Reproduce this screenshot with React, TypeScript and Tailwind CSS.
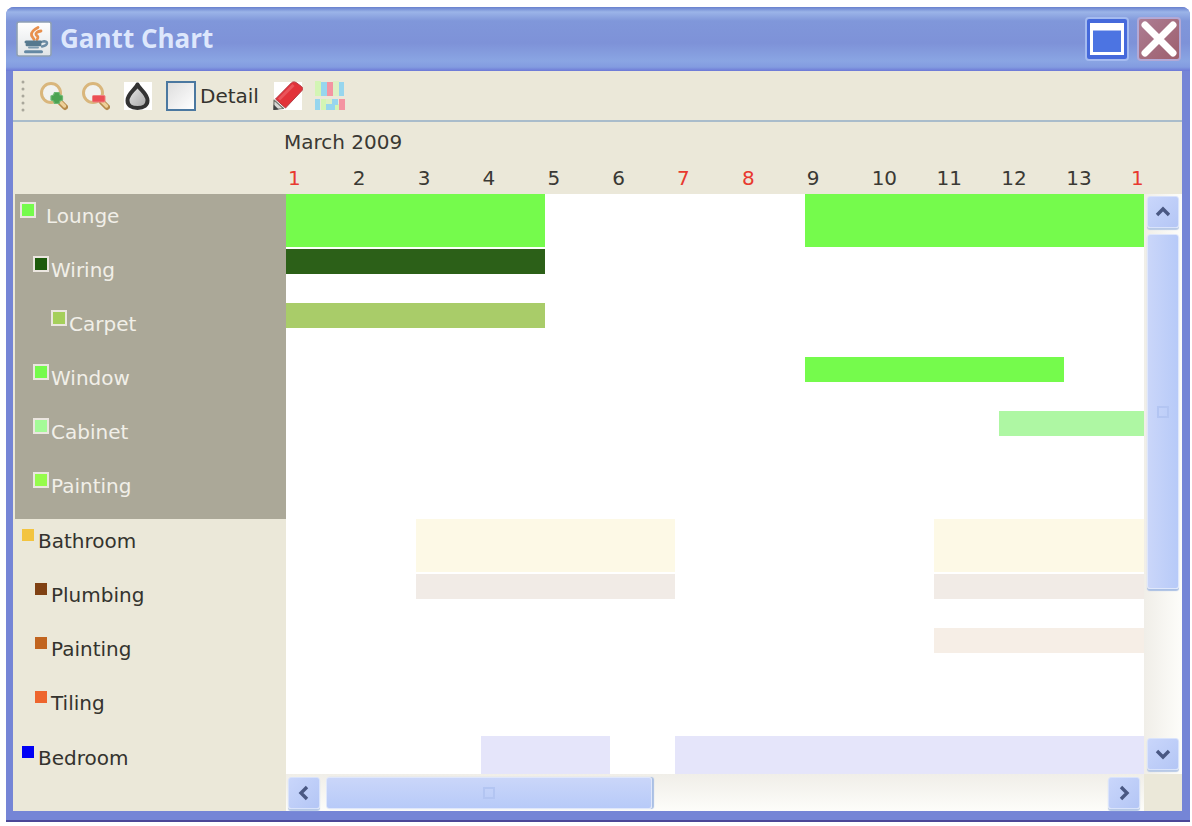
import React from "react";

type Bar = { span: string; color: string };
type Task = {
  name: string;
  indent: string;
  swatch: string;
  bars: Bar[];
};
type Group = { selected: boolean; tasks: Task[] };

const LEVEL0 = "pl-[7px]";
const LEVEL1 = "pl-5";
const LEVEL2 = "pl-[38px]";

const groups: Group[] = [
  {
    selected: true,
    tasks: [
      {
        name: "Lounge",
        indent: LEVEL0,
        swatch: "bg-[#75fb4c] mr-2",
        bars: [
          { span: "col-start-1 col-end-5", color: "bg-[#75fb4c]" },
          { span: "col-start-9 col-end-15", color: "bg-[#75fb4c]" },
        ],
      },
      {
        name: "Wiring",
        indent: LEVEL1,
        swatch: "bg-[#1d5a0c]",
        bars: [{ span: "col-start-1 col-end-5", color: "bg-[#2c6018]" }],
      },
      {
        name: "Carpet",
        indent: LEVEL2,
        swatch: "bg-[#a5cf5b]",
        bars: [{ span: "col-start-1 col-end-5", color: "bg-[#a9cc69]" }],
      },
      {
        name: "Window",
        indent: LEVEL1,
        swatch: "bg-[#75fb4c]",
        bars: [{ span: "col-start-9 col-end-13", color: "bg-[#75fb4c]" }],
      },
      {
        name: "Cabinet",
        indent: LEVEL1,
        swatch: "bg-[#a4fb98]",
        bars: [{ span: "col-start-12 col-end-15", color: "bg-[#aef7a3]" }],
      },
      { name: "Painting", indent: LEVEL1, swatch: "bg-[#96fb4c]", bars: [] },
    ],
  },
  {
    selected: false,
    tasks: [
      {
        name: "Bathroom",
        indent: LEVEL0,
        swatch: "bg-[#f3c43f]",
        bars: [
          { span: "col-start-3 col-end-7", color: "bg-[#fdf9e6]" },
          { span: "col-start-11 col-end-15", color: "bg-[#fdf9e6]" },
        ],
      },
      {
        name: "Plumbing",
        indent: LEVEL1,
        swatch: "bg-[#804113]",
        bars: [
          { span: "col-start-3 col-end-7", color: "bg-[#f1ebe6]" },
          { span: "col-start-11 col-end-15", color: "bg-[#f1ebe6]" },
        ],
      },
      {
        name: "Painting",
        indent: LEVEL1,
        swatch: "bg-[#c1641f]",
        bars: [{ span: "col-start-11 col-end-15", color: "bg-[#f6eee6]" }],
      },
      { name: "Tiling", indent: LEVEL1, swatch: "bg-[#ee652d]", bars: [] },
    ],
  },
];

const bedroom: Task = {
  name: "Bedroom",
  indent: LEVEL0,
  swatch: "bg-[#0000f5]",
  bars: [
    { span: "col-start-4 col-end-6", color: "bg-[#e5e5fa]" },
    { span: "col-start-7 col-end-15", color: "bg-[#e5e5fa]" },
  ],
};

const days = ["1", "2", "3", "4", "5", "6", "7", "8", "9", "10", "11", "12", "13", "1"];
const weekend = [0, 6, 7, 13];

const DAY_GRID = "grid grid-cols-[repeat(13,minmax(0,65fr))_minmax(0,15fr)]";

function TaskLabel({ task, selected, height }: { task: Task; selected: boolean; height: string }) {
  return (
    <li className={`flex items-start gap-1 ${height} ${task.indent}`}>
      <span
        className={`mt-[10px] size-3 shrink-0 ${task.swatch} ${selected ? "ring-2 ring-[#ebe6e0]" : ""}`}
      />
      <span className={`pt-2 leading-7 ${selected ? "text-[#f1efe8]" : "text-[#34332e]"}`}>
        {task.name}
      </span>
    </li>
  );
}

function BarRow({ task, height }: { task: Task; height: string }) {
  const summary = task.indent === LEVEL0;
  return (
    <div className={`${DAY_GRID} ${height}`}>
      {task.bars.map((bar) => (
        <div
          key={bar.span}
          className={`row-start-1 ${bar.span} ${bar.color} ${summary ? "max-h-[53px]" : "mt-px h-[25px]"}`}
        />
      ))}
    </div>
  );
}

function Chevron({ d, label }: { d: string; label: string }) {
  return (
    <button
      type="button"
      aria-label={label}
      className="flex size-8 shrink-0 items-center justify-center rounded-[3px] border border-[#d9e3fb] bg-linear-to-br from-[#c9d6fb] to-[#b4c6f5] shadow-[0_2px_1px_#b7c9e6]"
    >
      <svg viewBox="0 0 16 16" className="size-4" fill="none" stroke="#4a5883" strokeWidth="3.4">
        <path d={d} />
      </svg>
    </button>
  );
}

function JavaIcon() {
  return (
    <svg viewBox="0 0 36 36" className="size-9 shrink-0">
      <defs>
        <linearGradient id="java-bg" x1="0" y1="0" x2="0" y2="1">
          <stop offset="0" stopColor="#ffffff" />
          <stop offset="1" stopColor="#e0e4e6" />
        </linearGradient>
      </defs>
      <rect x="1" y="1" width="34" height="34" rx="2" fill="url(#java-bg)" stroke="#8fa0b4" strokeWidth="1.6" />
      <g fill="none" strokeLinecap="round">
        <path
          d="M22 6.500c-3 1.500-7 4-6.500 7.500.3 2 2 2.500 2.500 4.500M25 10c-3.500.5-5.500 2-5 3.500.4 1.500 3.500 1.500 1 5"
          stroke="#e8904d"
          strokeWidth="2.800"
        />
        <path d="M10 21h15M11 23.800h13" stroke="#56798f" strokeWidth="3" />
        <path d="M27 20.500c5-1 6 3.500-1 5" stroke="#6c8ca4" strokeWidth="2.600" />
        <path d="M13 26.500h9" stroke="#7f9bb0" strokeWidth="2" />
        <path d="M9.500 30.800h16" stroke="#6488a3" strokeWidth="3" />
      </g>
    </svg>
  );
}

function Magnifier({ sign }: { sign: "in" | "out" }) {
  return (
    <svg viewBox="0 0 28 30" className="h-[30px] w-7">
      <path d="M20 21l5 5" stroke="#b58a4b" strokeWidth="6" strokeLinecap="round" />
      <path d="M20 20.500l4.500 4.500" stroke="#edcf98" strokeWidth="3.400" strokeLinecap="round" />
      <circle cx="11" cy="12" r="9.500" fill="#f1f2ef" stroke="#d9b67c" strokeWidth="3" />
      {sign === "in" ? (
        <path
          d="M14.500 11.500h4.500l1 2.500 2.500 1v4l-2.500 1-1 2.500h-4.500l-1-2.500-2.500-1v-4l2.500-1z"
          fill="#4ba352"
          stroke="#6cb873"
          strokeWidth="1.200"
          strokeLinejoin="round"
        />
      ) : (
        <rect x="10.500" y="14.500" width="12.500" height="6.500" rx="1" fill="#ec4f56" stroke="#ee8080" />
      )}
    </svg>
  );
}

function DropIcon() {
  return (
    <svg viewBox="0 0 28 30" className="h-[30px] w-7">
      <defs>
        <linearGradient id="drop-fill" x1="0" y1="0" x2="1" y2="1">
          <stop offset="0" stopColor="#ededed" />
          <stop offset="1" stopColor="#a2a2a2" />
        </linearGradient>
      </defs>
      <rect y="1" width="28" height="28" fill="#ffffff" />
      <path
        d="M13.500 3.500C12 8 3.500 12.500 3.500 19.500c0 4.500 3.500 7.500 10 7.500s10-3 10-7.500C23.500 12.500 15 8 13.500 3.500z"
        fill="url(#drop-fill)"
        stroke="#333333"
        strokeWidth="4"
        strokeLinejoin="round"
      />
    </svg>
  );
}

function PencilIcon() {
  return (
    <svg viewBox="0 0 30 30" className="size-[30px]">
      <rect x="1" y="1" width="28" height="28" fill="#ffffff" />
      <path d="M.8 28.500L1 19l9.500 8.500z" fill="#d8d8d4" stroke="#77776f" strokeWidth="1.200" strokeLinejoin="round" />
      <path d="M.5 29l.2-5.500 5 5z" fill="#444444" />
      <path
        d="M2.500 18L18.500 1.800c1-1 3-1.300 4.500-.3l5.500 4c1.500 1.200 1.500 3 .5 4L12.500 27z"
        fill="#e2323a"
        stroke="#b23a42"
        strokeWidth="1"
        strokeLinejoin="round"
      />
      <path d="M6 18.500L20.500 4" stroke="#ea545b" strokeWidth="3" />
    </svg>
  );
}

function BlocksIcon() {
  return (
    <svg viewBox="0 0 30 30" className="size-[30px]">
      <g fill="#d3f5b4">
        <rect x="0" y="0" width="6" height="15" />
        <rect x="18" y="0" width="6" height="15" opacity="0.6" />
        <rect x="6" y="18" width="5" height="11" />
        <rect x="11" y="18" width="7" height="5" opacity="0.6" />
        <rect x="19" y="23" width="5" height="6" />
      </g>
      <g fill="#97d6ee">
        <rect x="6" y="1" width="6" height="14" />
        <rect x="24" y="1" width="5" height="14" />
        <rect x="0" y="18" width="5" height="11" />
        <rect x="17" y="18" width="6" height="6" />
        <rect x="11" y="23" width="9" height="6" />
      </g>
      <g fill="#f494a2">
        <rect x="12" y="1" width="6" height="14" />
        <rect x="24" y="18" width="6" height="11" />
      </g>
    </svg>
  );
}

function Grip() {
  return (
    <svg viewBox="0 0 4 34" className="mr-[15px] h-[34px] w-1" fill="#a9a79b">
      <circle cx="2" cy="3" r="1.500" />
      <circle cx="2" cy="10" r="1.500" />
      <circle cx="2" cy="17" r="1.500" />
      <circle cx="2" cy="24" r="1.500" />
      <circle cx="2" cy="31" r="1.500" />
    </svg>
  );
}

export default function App() {
  return (
    <div className="bg-white pt-[7px] pr-0.5 pb-1 pl-1.5 font-['DejaVu_Sans',sans-serif] text-[20px]">
      <div className="overflow-hidden rounded-t-lg border-b-2 border-[#4b4797] bg-[#7585d6]">
        <header className="flex h-16 items-center gap-2 bg-[linear-gradient(to_bottom,#6880cd_0px,#9bb4e8_5px,#8097da_14px,#7e92d8_36px,#8aa5e3_54px,#839ce0_60px,#6d78d6_64px)] pr-[9px] pl-2.5">
          <JavaIcon />
          <h1 className="flex-1 pb-0.5 font-['Open_Sans','Noto_Sans',sans-serif] text-[26px] leading-8 font-bold text-[#dde7fc]">
            Gantt Chart
          </h1>
          <button
            type="button"
            aria-label="Maximize"
            className="flex size-11 items-center justify-center rounded-[4px] border-2 border-[#a5bbf0] bg-[#4569db]"
          >
            <svg viewBox="0 0 34 34" className="size-[34px]">
              <rect x="1.500" y="2.500" width="31" height="29" fill="#4c74e2" stroke="#ffffff" strokeWidth="3" />
              <path d="M0 5h34" stroke="#ffffff" strokeWidth="7" />
            </svg>
          </button>
          <button
            type="button"
            aria-label="Close"
            className="flex size-11 items-center justify-center rounded-[4px] border-2 border-[#b3a9d6] bg-linear-to-br from-[#ad7d94] to-[#9d5f6d]"
          >
            <svg viewBox="0 0 36 36" className="size-9" stroke="#ffffff" strokeWidth="7" strokeLinecap="round">
              <path d="M4 4l28 28M32 4L4 32" />
            </svg>
          </button>
        </header>

        <div className="mr-2 mb-[9px] ml-[7px] bg-[#ebe8d9]">
          <div className="flex h-[51px] items-center border-b-2 border-[#a9bccb] pl-2">
            <Grip />
            <button type="button" aria-label="Zoom in" className="mr-3.5">
              <Magnifier sign="in" />
            </button>
            <button type="button" aria-label="Zoom out" className="mr-3.5">
              <Magnifier sign="out" />
            </button>
            <button type="button" aria-label="Fill" className="mr-3.5">
              <DropIcon />
            </button>
            <label className="mr-3.5 flex items-center gap-1 text-[#34332e]">
              <input
                type="checkbox"
                className="size-[30px] appearance-none border-2 border-[#4b78a0] bg-linear-to-br from-[#dedede] to-white"
              />
              Detail
            </label>
            <button type="button" aria-label="Edit" className="mr-3">
              <PencilIcon />
            </button>
            <button type="button" aria-label="Colours">
              <BlocksIcon />
            </button>
          </div>

          <div className="ml-0.5 grid grid-cols-[271px_minmax(0,1fr)_38px]">
            <div className="col-start-2 flex h-[72px] flex-col pt-1 text-[#3a3934]">
              <div className="-ml-0.5 leading-8">March 2009</div>
              <div className={`${DAY_GRID} pt-1 leading-8`}>
                {days.map((day, i) => (
                  <span key={i} className={`pl-0.5 ${weekend.includes(i) ? "text-[#e8392f]" : ""}`}>
                    {day}
                  </span>
                ))}
              </div>
            </div>

            <ul className="col-start-1 row-span-2 row-start-2">
              {groups.map((group, g) => (
                <li key={g} className={`pb-px ${group.selected ? "bg-[#aba898]" : ""}`}>
                  <ul>
                    {group.tasks.map((task, i) => (
                      <TaskLabel key={i} task={task} selected={group.selected} height="h-[54px]" />
                    ))}
                  </ul>
                </li>
              ))}
              <TaskLabel task={bedroom} selected={false} height="h-[38px]" />
            </ul>

            <div className="col-start-2 row-start-2 bg-white">
              {groups.map((group, g) => (
                <div key={g} className="pb-px">
                  {group.tasks.map((task, i) => (
                    <BarRow key={i} task={task} height="h-[54px]" />
                  ))}
                </div>
              ))}
              <BarRow task={bedroom} height="h-[38px]" />
            </div>

            <div className="col-start-3 row-start-2 flex flex-col items-center bg-linear-to-r from-[#f0eee8] to-[#fdfdfa] pt-0.5 pb-1">
              <Chevron label="Scroll up" d="M2 11L8 5l6 6" />
              <div className="flex w-8 flex-1 flex-col pt-1.5 pb-1">
                <div className="flex h-[71%] items-center justify-center rounded-[3px] border border-[#dfe7fb] bg-linear-to-r from-[#cad6f9] to-[#b7caf8] shadow-[0_2px_1px_#a9bfe4]">
                  <span className="size-3 border-2 border-[#b3c5f2]" />
                </div>
              </div>
              <Chevron label="Scroll down" d="M2 5l6 6 6-6" />
            </div>

            <div className="col-start-2 row-start-3 flex h-[37px] items-center bg-linear-to-b from-[#f0eee8] to-[#fdfdfa] pr-1 pl-0.5">
              <Chevron label="Scroll left" d="M11 2L5 8l6 6" />
              <div className="flex h-8 flex-1 px-1.5">
                <div className="flex w-[42%] items-center justify-center rounded-[3px] border border-[#dfe7fb] bg-linear-to-b from-[#cad6f9] to-[#b7caf8] shadow-[2px_0_1px_#a9bfe4]">
                  <span className="size-3 border-2 border-[#b3c5f2]" />
                </div>
              </div>
              <Chevron label="Scroll right" d="M5 2l6 6-6 6" />
            </div>
          </div>
        </div>
      </div>
    </div>
  );
}
